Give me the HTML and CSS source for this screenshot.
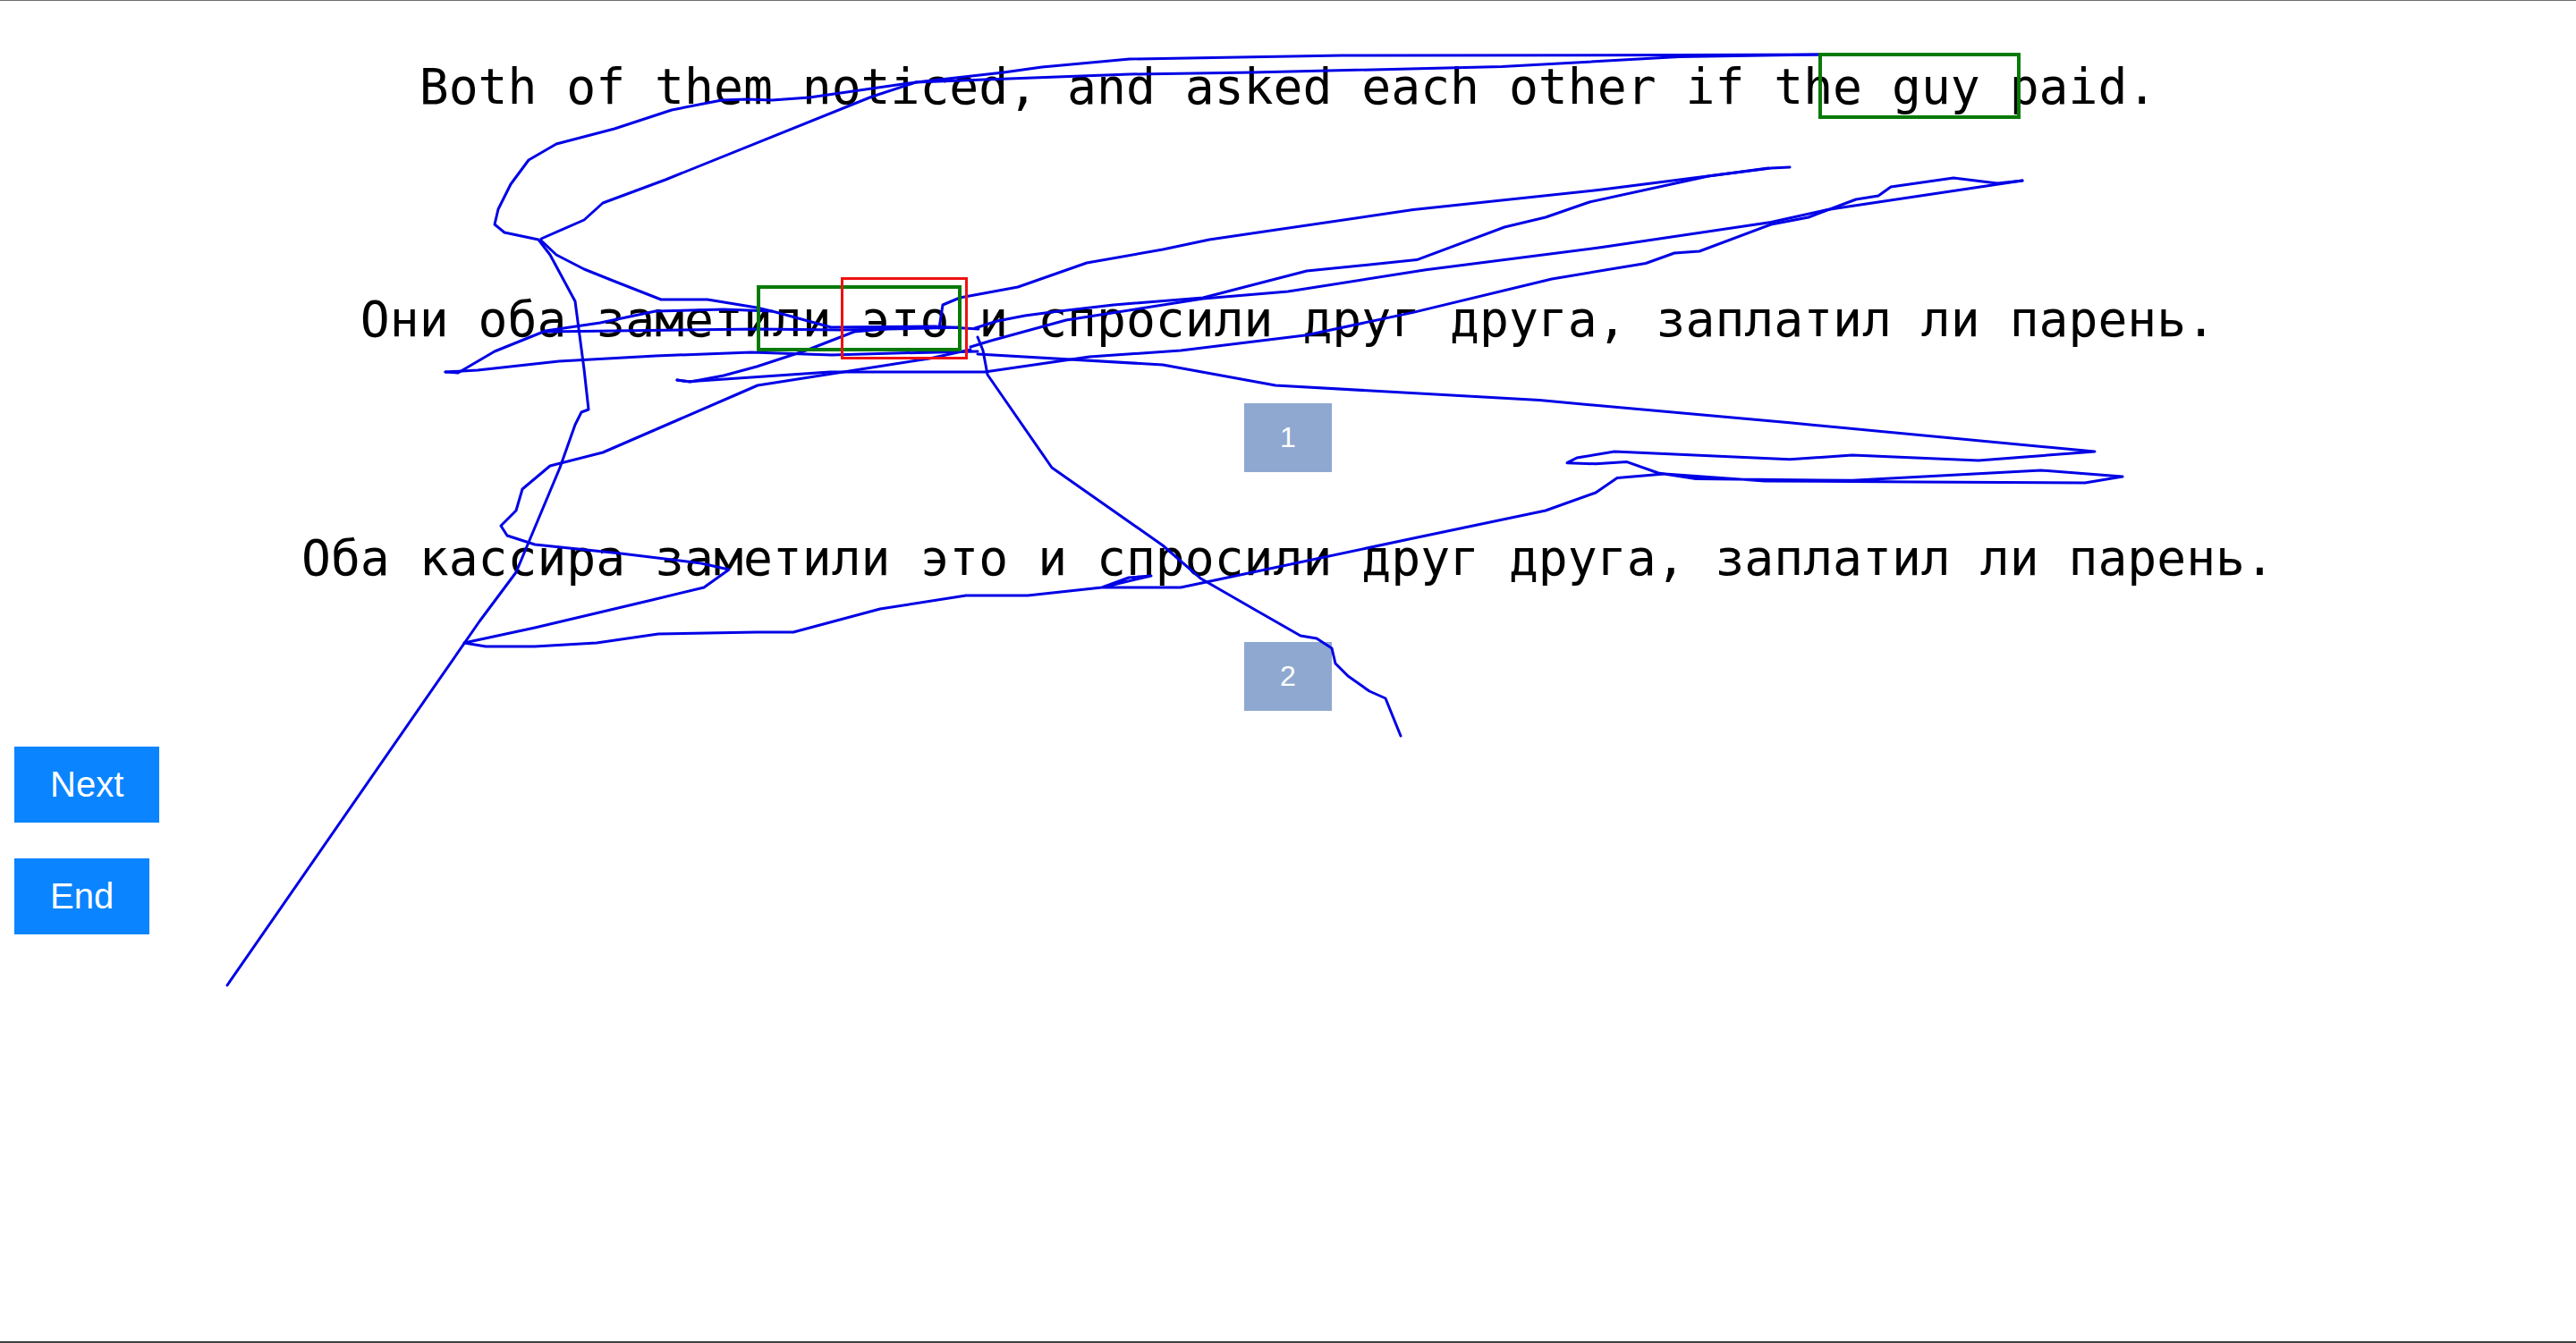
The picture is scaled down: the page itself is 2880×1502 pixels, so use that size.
FILE: index.html
```html
<!DOCTYPE html>
<html lang="en">
<head>
<meta charset="utf-8">
<title>Reading trial</title>
<link rel="stylesheet" href="styles.css">
</head>
<body>
<div class="page">
  <main class="stage">
    <p class="line">Both of them noticed, and asked each other if the guy paid.</p>
    <p class="line line-2">Они оба заметили это и спросили друг друга, заплатил ли парень.</p>
    <div class="choice choice-1">1</div>
    <p class="line line-3">Оба кассира заметили это и спросили друг друга, заплатил ли парень.</p>
    <div class="choice choice-2">2</div>
  </main>
  <div class="actions">
    <button class="btn" type="button">Next</button>
    <button class="btn" type="button">End</button>
  </div>
  <svg class="trace" width="2880" height="1502" viewBox="0 0 2880 1502" xmlns="http://www.w3.org/2000/svg">
    <g class="gaze">
      <polyline points="2033,60 1875,60.5 1500,61 1263,65 1165,74 1122,80 1024,91 905,108 863,111 835,110 807,111 751,122 687,143 622,160 591,178 571,205 557,233 553,250 564,259 602,267 615,284 643,336 653,412 658,457 650,460 643,474 626,522 577,639 536,694 254,1101"/>
      <polyline points="2033,60 1877,62.5 1679,73.6 1400,80 1263,82 1101,88 1024,91 975,107 744,200 674,226 653,245 605,266"/>
      <polyline points="605,268 622,284 653,300 688,314 739,334 791,334 846,343 867,348 929,365 1045,364 1094,367"/>
      <polyline points="2001,186 1980,187 1791,211 1580,233.5 1352,267 1300,278 1215,293 1138,320 1073,332 1054,340 1052,353 1050,366"/>
      <polyline points="1977,187 1910,196 1777,225 1728,242 1682,253 1584,289.6 1461,302 1345,332 1245,340 1176,348 1146,352 1115,358 1090,366"/>
      <polyline points="2261,201 2043,233.5 1980,247.5 1791,275.5 1594,300.8 1440,325 1345,333 1192,357 1108,380 1085,387"/>
      <polyline points="2261,201 2233,204 2184,198 2114,208 2100,218 2075,222 2022,242 1980,250 1900,280 1872,282 1840,293.5 1735,311 1580,348.4 1461,373.7 1320,391 1218,398 1101,415 997,415 928,415 770,425.7 757,424"/>
      <polyline points="1093,376 1099,391 1104,418 1176,522 1300,609 1342,645.7 1405,682 1454,710 1472,713 1489,724 1493,741 1507,755 1531,772 1549,780 1566,822"/>
      <polyline points="498,415 512,416 553,392 610,369 671,360 733,347 809,345 863,347"/>
      <polyline points="498,415 534,413 625,403 733,397 840,393 930,396 1000,394 1093,392"/>
      <polyline points="610,370 847,367 939,368 1039,366 1073,365"/>
      <polyline points="757,424 772,426 809,419 846,409 901,391 955,370 1000,366"/>
      <polyline points="1085,390 1039,400 847,430 824,440 674,505 615,520 584,546 577,570 560,587 567,598 598,608 694,618 784,629 815,636 787,656 729,670 598,701 519,718 543,722 598,722 667,718 736,708 846,706 887,706 984,680 1080,665 1149,665 1232,656 1287,643 1262,645 1232,656 1320,656 1580,601 1728,570 1784,550 1808,533.5 1861,529 1973,537 2142,538 2331,539 2373,532 2282,525 2071,536.3 1896,534.6 1854,528 1819,515.6 1784,517.8 1752,516.7 1763,511 1805,504 2001,512.8 2071,508 2212,514 2342,504 2001,471.8 1721,446.6 1426,430 1300,407 1093,395"/>
    </g>
    <rect class="box-green" x="2035" y="60" width="222" height="70"/>
    <rect class="box-green" x="848" y="320" width="225" height="70"/>
    <rect class="box-red" x="941.5" y="310.5" width="139" height="89"/>
  </svg>
</div>
</body>
</html>
```

FILE: styles.css
```css
html, body {
  margin: 0;
  padding: 0;
  background: #ffffff;
}

.page {
  position: relative;
  box-sizing: border-box;
  width: 2880px;
  height: 1502px;
  border-top: 1px solid #6e6e6e;
  border-bottom: 2px solid #3e4242;
  overflow: hidden;
}

.stage {
  display: flex;
  flex-direction: column;
  align-items: center;
  padding-top: 64px;
}

.line {
  margin: 0;
  width: 100%;
  height: 64px;
  line-height: 64px;
  text-align: center;
  white-space: pre;
  font-family: "DejaVu Sans Mono", monospace;
  font-size: 54.7px;
  color: #000000;
}

.line-2 {
  margin-top: 196px;
}

.line-3 {
  margin-top: 64px;
}

.choice {
  margin-top: 62px;
  width: 98px;
  height: 77px;
  display: flex;
  align-items: center;
  justify-content: center;
  background: #8fa8d0;
  color: #ffffff;
  font-family: "Liberation Sans", Arial, sans-serif;
  font-size: 32px;
}

.actions {
  display: flex;
  flex-direction: column;
  align-items: flex-start;
  gap: 40px;
  margin-top: 40px;
  padding-left: 16px;
}

.btn {
  margin: 0;
  border: none;
  border-radius: 0;
  padding: 20px 40px;
  height: 85px;
  background: #0a84ff;
  color: #ffffff;
  font-family: "Liberation Sans", Arial, sans-serif;
  font-size: 40px;
  line-height: 45px;
}

.trace {
  position: absolute;
  top: 0;
  left: 0;
  pointer-events: none;
}

.gaze polyline {
  fill: none;
  stroke: #0000e6;
  stroke-width: 3;
  stroke-linejoin: round;
  stroke-linecap: round;
}

.box-green {
  fill: none;
  stroke: #087a08;
  stroke-width: 4;
}

.box-red {
  fill: none;
  stroke: #ee1111;
  stroke-width: 3;
}
```
